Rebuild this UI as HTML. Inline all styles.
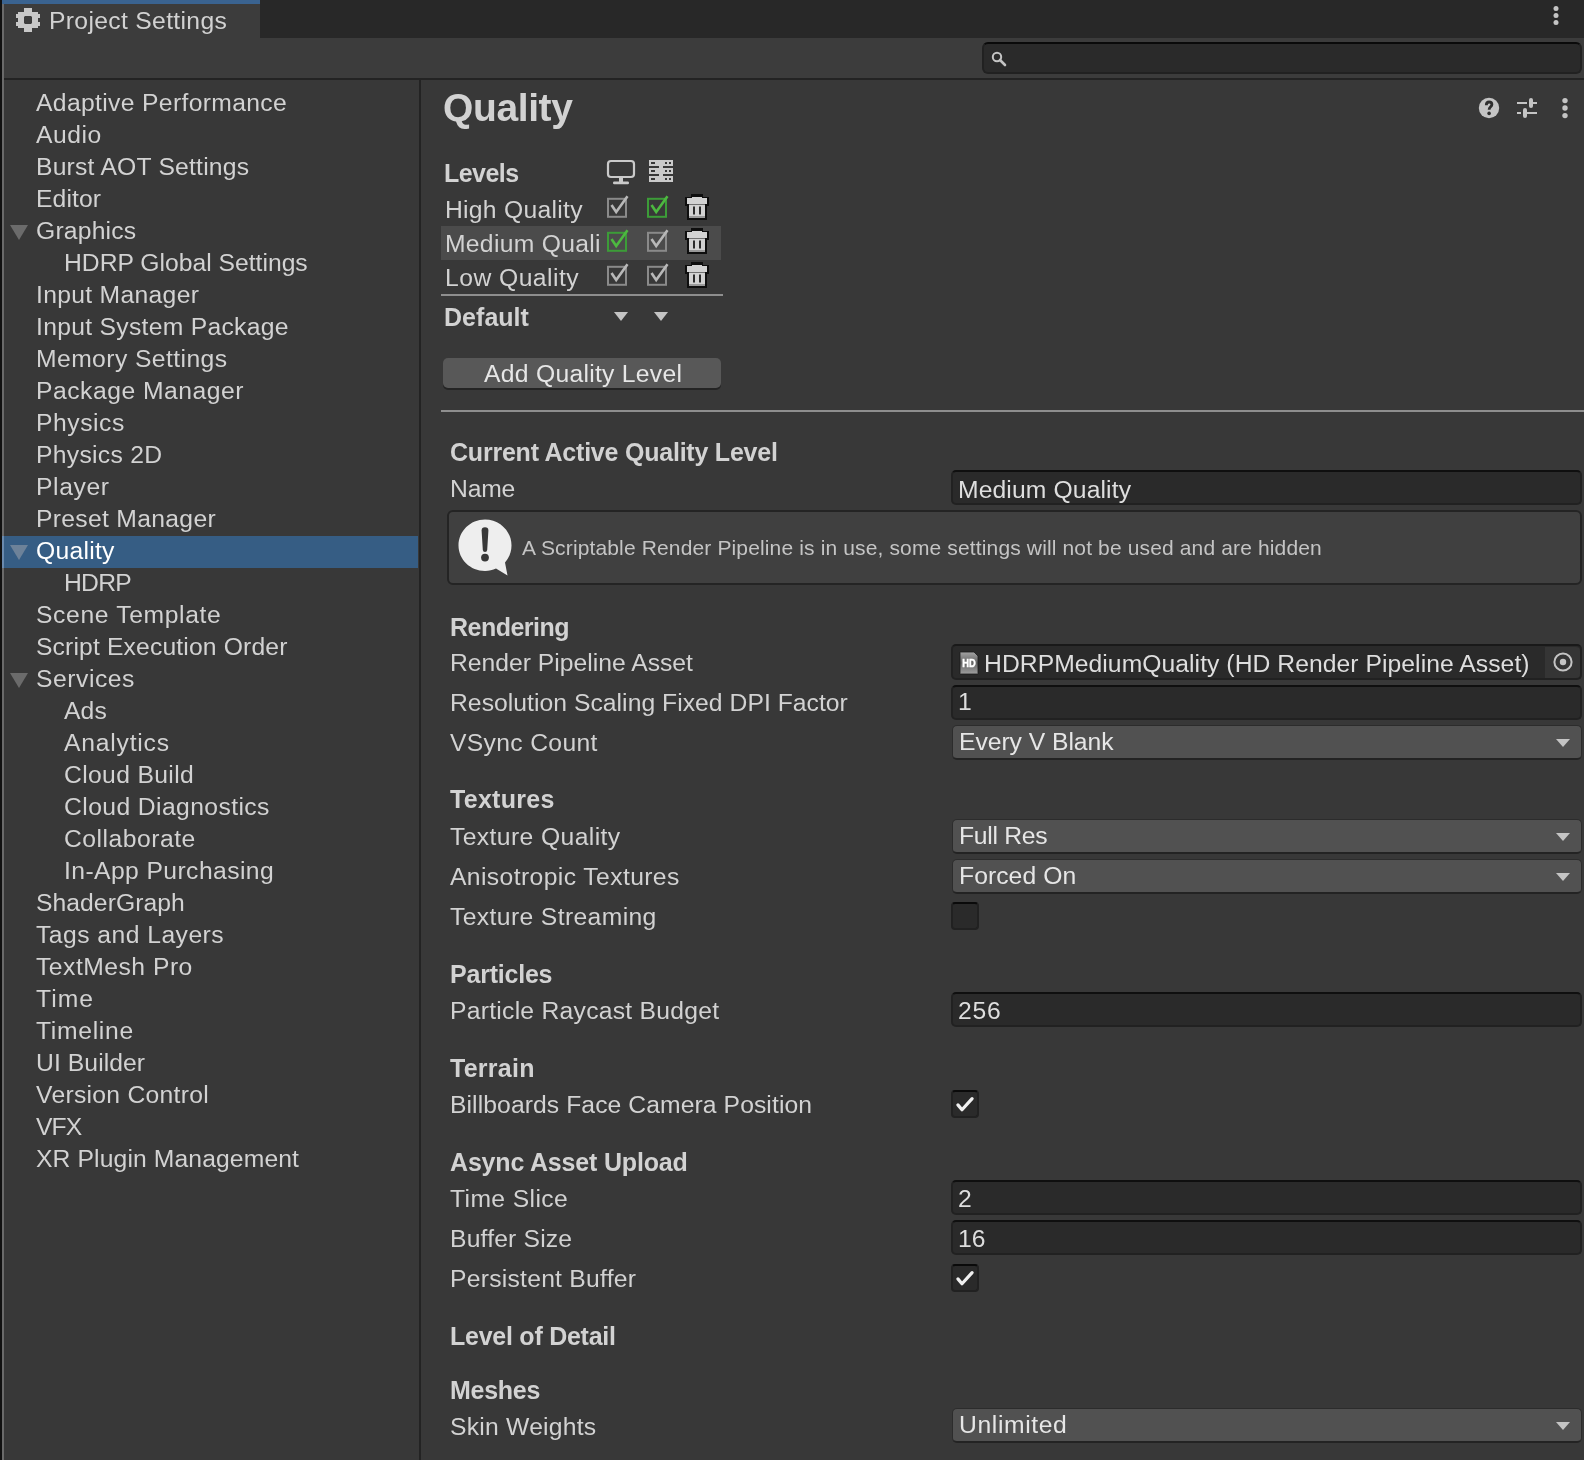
<!DOCTYPE html>
<html><head><meta charset="utf-8"><style>
*{margin:0;padding:0;box-sizing:border-box}
html,body{width:1584px;height:1460px;overflow:hidden;background:#383838;font-family:"Liberation Sans",sans-serif;}
.t{position:absolute;white-space:nowrap;line-height:1;color:#D2D2D2;will-change:transform;}
.r{position:absolute;}
svg{position:absolute;overflow:visible}
</style></head><body>
<div class="r" style="left:0px;top:0px;width:1584px;height:38px;background:#282828"></div>
<div class="r" style="left:0px;top:38px;width:1584px;height:40px;background:#3C3C3C"></div>
<div class="r" style="left:0px;top:78px;width:1584px;height:2px;background:#232323"></div>
<div class="r" style="left:2px;top:0px;width:258px;height:38px;background:#3C3C3C"></div>
<div class="r" style="left:2px;top:0px;width:258px;height:4px;background:#3A6390"></div>
<div class="r" style="left:0px;top:0px;width:2px;height:1460px;background:#111111"></div>
<div class="r" style="left:2px;top:4px;width:2px;height:1456px;background:#6A6A6A"></div>
<svg style="left:16px;top:8px" width="24" height="24" viewBox="0 0 24 24">
<path fill="#C8C8C8" fill-rule="evenodd" d="M8 0H16V4H22V6H24V10H22V14H24V18H22V20H16V24H8V20H2V18H0V14H2V10H0V6H2V4H8Z M9 8H15L16 9V15L15 16H9L8 15V9Z"/></svg>
<div class="t" style="left:49px;top:9.39px;font-size:24.7px;letter-spacing:0.326px;">Project Settings</div>
<svg style="left:1552px;top:4px" width="10" height="24" viewBox="0 0 10 24">
<circle cx="4" cy="4.5" r="2.5" fill="#C4C4C4"/><circle cx="4" cy="11.5" r="2.5" fill="#C4C4C4"/><circle cx="4" cy="18.5" r="2.5" fill="#C4C4C4"/></svg>
<div class="r" style="left:982px;top:42px;width:600px;height:32px;background:#2A2A2A;border:2px solid #212121;border-top-color:#0A0A0A;border-radius:6px"></div>
<svg style="left:990px;top:50px" width="18" height="18" viewBox="0 0 18 18">
<circle cx="7" cy="7" r="4.2" fill="none" stroke="#C4C4C4" stroke-width="2"/><path d="M10 10 L15 15" stroke="#C4C4C4" stroke-width="2.6" stroke-linecap="round"/></svg>
<div class="r" style="left:419px;top:80px;width:2px;height:1380px;background:#232323"></div>
<div class="t" style="left:36px;top:91.39px;font-size:24.7px;letter-spacing:0.342px;">Adaptive Performance</div>
<div class="t" style="left:36px;top:123.39px;font-size:24.7px;letter-spacing:0.500px;">Audio</div>
<div class="t" style="left:36px;top:155.39px;font-size:24.7px;letter-spacing:0.212px;">Burst AOT Settings</div>
<div class="t" style="left:36px;top:187.39px;font-size:24.7px;letter-spacing:0.100px;">Editor</div>
<svg style="left:10px;top:225px" width="18" height="16" viewBox="0 0 18 16"><path d="M0 0H18L9 15z" fill="#6B6B6B"/></svg>
<div class="t" style="left:36px;top:219.39px;font-size:24.7px;letter-spacing:0.199px;">Graphics</div>
<div class="t" style="left:64px;top:251.39px;font-size:24.7px;letter-spacing:-0.005px;">HDRP Global Settings</div>
<div class="t" style="left:36px;top:283.39px;font-size:24.7px;letter-spacing:0.309px;">Input Manager</div>
<div class="t" style="left:36px;top:315.39px;font-size:24.7px;letter-spacing:0.289px;">Input System Package</div>
<div class="t" style="left:36px;top:347.39px;font-size:24.7px;letter-spacing:0.421px;">Memory Settings</div>
<div class="t" style="left:36px;top:379.39px;font-size:24.7px;letter-spacing:0.508px;">Package Manager</div>
<div class="t" style="left:36px;top:411.39px;font-size:24.7px;letter-spacing:0.550px;">Physics</div>
<div class="t" style="left:36px;top:443.39px;font-size:24.7px;letter-spacing:0.300px;">Physics 2D</div>
<div class="t" style="left:36px;top:475.39px;font-size:24.7px;letter-spacing:0.620px;">Player</div>
<div class="t" style="left:36px;top:507.39px;font-size:24.7px;letter-spacing:0.308px;">Preset Manager</div>
<div class="r" style="left:4px;top:536px;width:414px;height:32px;background:#365D84"></div>
<div class="r" style="left:2px;top:536px;width:2px;height:32px;background:#6A8AAE"></div>
<svg style="left:10px;top:545px" width="18" height="16" viewBox="0 0 18 16"><path d="M0 0H18L9 15z" fill="#6D8299"/></svg>
<div class="t" style="left:36px;top:539.39px;font-size:24.7px;letter-spacing:0.266px;color:#FFFFFF;">Quality</div>
<div class="t" style="left:64px;top:571.39px;font-size:24.7px;letter-spacing:-0.733px;">HDRP</div>
<div class="t" style="left:36px;top:603.39px;font-size:24.7px;letter-spacing:0.631px;">Scene Template</div>
<div class="t" style="left:36px;top:635.39px;font-size:24.7px;letter-spacing:0.148px;">Script Execution Order</div>
<svg style="left:10px;top:673px" width="18" height="16" viewBox="0 0 18 16"><path d="M0 0H18L9 15z" fill="#6B6B6B"/></svg>
<div class="t" style="left:36px;top:667.39px;font-size:24.7px;letter-spacing:0.529px;">Services</div>
<div class="t" style="left:64px;top:699.39px;font-size:24.7px;letter-spacing:0.150px;">Ads</div>
<div class="t" style="left:64px;top:731.39px;font-size:24.7px;letter-spacing:0.775px;">Analytics</div>
<div class="t" style="left:64px;top:763.39px;font-size:24.7px;letter-spacing:0.350px;">Cloud Build</div>
<div class="t" style="left:64px;top:795.39px;font-size:24.7px;letter-spacing:0.406px;">Cloud Diagnostics</div>
<div class="t" style="left:64px;top:827.39px;font-size:24.7px;letter-spacing:0.500px;">Collaborate</div>
<div class="t" style="left:64px;top:859.39px;font-size:24.7px;letter-spacing:0.411px;">In-App Purchasing</div>
<div class="t" style="left:36px;top:891.39px;font-size:24.7px;letter-spacing:0.050px;">ShaderGraph</div>
<div class="t" style="left:36px;top:923.39px;font-size:24.7px;letter-spacing:0.464px;">Tags and Layers</div>
<div class="t" style="left:36px;top:955.39px;font-size:24.7px;letter-spacing:0.491px;">TextMesh Pro</div>
<div class="t" style="left:36px;top:987.39px;font-size:24.7px;letter-spacing:1.033px;">Time</div>
<div class="t" style="left:36px;top:1019.39px;font-size:24.7px;letter-spacing:0.686px;">Timeline</div>
<div class="t" style="left:36px;top:1051.39px;font-size:24.7px;letter-spacing:0.078px;">UI Builder</div>
<div class="t" style="left:36px;top:1083.39px;font-size:24.7px;letter-spacing:0.278px;">Version Control</div>
<div class="t" style="left:36px;top:1115.39px;font-size:24.7px;letter-spacing:-0.900px;">VFX</div>
<div class="t" style="left:36px;top:1147.39px;font-size:24.7px;letter-spacing:0.116px;">XR Plugin Management</div>
<div class="t" style="left:443px;top:88.48px;font-size:39.0px;letter-spacing:-0.383px;font-weight:bold;">Quality</div>
<svg style="left:1478px;top:97px" width="22" height="22" viewBox="0 0 22 22">
<circle cx="11" cy="11" r="10.2" fill="#C4C4C4"/>
<path d="M8.3 8.2 C8.3 6 9.6 5 11.1 5 C12.8 5 13.9 6.1 13.9 7.5 C13.9 9.8 11.1 10 11.1 12.8" fill="none" stroke="#2E2E2E" stroke-width="2.8"/>
<circle cx="11.1" cy="16.4" r="1.8" fill="#2E2E2E"/></svg>
<svg style="left:1516px;top:97px" width="22" height="22" viewBox="0 0 22 22">
<rect x="1" y="5" width="10" height="2" fill="#C4C4C4"/><rect x="17" y="5" width="4" height="2" fill="#C4C4C4"/>
<rect x="13" y="1" width="4" height="10" rx="2" fill="#C4C4C4"/>
<rect x="1" y="15" width="4" height="2" fill="#C4C4C4"/><rect x="11" y="15" width="10" height="2" fill="#C4C4C4"/>
<rect x="7" y="11" width="4" height="10" rx="2" fill="#C4C4C4"/></svg>
<svg style="left:1560px;top:97px" width="10" height="22" viewBox="0 0 10 22">
<circle cx="5" cy="3.6" r="2.7" fill="#C4C4C4"/><circle cx="5" cy="11" r="2.7" fill="#C4C4C4"/><circle cx="5" cy="18.6" r="2.7" fill="#C4C4C4"/></svg>
<div class="t" style="left:444px;top:160.83px;font-size:25.0px;letter-spacing:-0.560px;font-weight:bold;">Levels</div>
<svg style="left:606px;top:159px" width="30" height="27" viewBox="0 0 30 27">
<rect x="2" y="2" width="26" height="16" rx="3" fill="none" stroke="#CACACA" stroke-width="2.2"/>
<rect x="13" y="19" width="4" height="4" fill="#CACACA"/><rect x="7" y="22.6" width="16" height="2.6" rx="1.2" fill="#CACACA"/></svg>
<svg style="left:649px;top:160px" width="24" height="23" viewBox="0 0 24 23">
<g fill="#CACACA"><rect x="0" y="0" width="24" height="6"/><rect x="0" y="8" width="24" height="6"/><rect x="0" y="16" width="24" height="6"/>
<rect x="10" y="0" width="4" height="22"/></g>
<g fill="#383838"><rect x="2" y="2" width="4" height="2"/><rect x="16" y="2" width="2" height="2"/><rect x="20" y="2" width="2" height="2"/>
<rect x="2" y="10" width="4" height="2"/><rect x="16" y="10" width="2" height="2"/><rect x="20" y="10" width="2" height="2"/>
<rect x="2" y="18" width="4" height="2"/><rect x="16" y="18" width="2" height="2"/><rect x="20" y="18" width="2" height="2"/></g></svg>
<div class="r" style="left:441px;top:226px;width:280px;height:34px;background:#4B4B4B"></div>
<div class="t" style="left:445px;top:198.09px;font-size:24.7px;letter-spacing:0.273px;">High Quality</div>
<svg style="left:607px;top:194px" width="24" height="24" viewBox="0 0 24 24">
<rect x="1" y="4.8" width="18" height="18" fill="none" stroke="#8A8A8A" stroke-width="2"/>
<path d="M4.5 11 L9.2 18 L20.5 2.2" fill="none" stroke="#B8B8B8" stroke-width="2.6"/></svg>
<svg style="left:647px;top:194px" width="24" height="24" viewBox="0 0 24 24">
<rect x="1" y="4.8" width="18" height="18" fill="none" stroke="#3C9C38" stroke-width="2"/>
<path d="M4.5 11 L9.2 18 L20.5 2.2" fill="none" stroke="#4DB840" stroke-width="2.6"/></svg>
<svg style="left:685px;top:194px" width="24" height="26" viewBox="0 0 24 26">
<path d="M6 0h12v3h6v9h-2v14H2V12H0V3h6z" fill="#0E0E0E"/>
<rect x="2" y="4" width="20" height="6" fill="#D2D2D2"/><rect x="7" y="3" width="10" height="2" fill="#D2D2D2"/>
<rect x="4" y="10.5" width="16" height="13.5" fill="#D2D2D2"/><rect x="4" y="22" width="16" height="2" fill="#9A9A9A"/>
<rect x="8" y="12.5" width="2" height="8" fill="#2A2A2A"/><rect x="14" y="12.5" width="2" height="8" fill="#2A2A2A"/></svg>
<div class="t" style="left:445px;top:232.09px;font-size:24.7px;letter-spacing:0.290px;">Medium Quali</div>
<svg style="left:607px;top:228px" width="24" height="24" viewBox="0 0 24 24">
<rect x="1" y="4.8" width="18" height="18" fill="none" stroke="#3C9C38" stroke-width="2"/>
<path d="M4.5 11 L9.2 18 L20.5 2.2" fill="none" stroke="#4DB840" stroke-width="2.6"/></svg>
<svg style="left:647px;top:228px" width="24" height="24" viewBox="0 0 24 24">
<rect x="1" y="4.8" width="18" height="18" fill="none" stroke="#8A8A8A" stroke-width="2"/>
<path d="M4.5 11 L9.2 18 L20.5 2.2" fill="none" stroke="#B8B8B8" stroke-width="2.6"/></svg>
<svg style="left:685px;top:228px" width="24" height="26" viewBox="0 0 24 26">
<path d="M6 0h12v3h6v9h-2v14H2V12H0V3h6z" fill="#0E0E0E"/>
<rect x="2" y="4" width="20" height="6" fill="#D2D2D2"/><rect x="7" y="3" width="10" height="2" fill="#D2D2D2"/>
<rect x="4" y="10.5" width="16" height="13.5" fill="#D2D2D2"/><rect x="4" y="22" width="16" height="2" fill="#9A9A9A"/>
<rect x="8" y="12.5" width="2" height="8" fill="#2A2A2A"/><rect x="14" y="12.5" width="2" height="8" fill="#2A2A2A"/></svg>
<div class="t" style="left:445px;top:266.19px;font-size:24.7px;letter-spacing:0.460px;">Low Quality</div>
<svg style="left:607px;top:262px" width="24" height="24" viewBox="0 0 24 24">
<rect x="1" y="4.8" width="18" height="18" fill="none" stroke="#8A8A8A" stroke-width="2"/>
<path d="M4.5 11 L9.2 18 L20.5 2.2" fill="none" stroke="#B8B8B8" stroke-width="2.6"/></svg>
<svg style="left:647px;top:262px" width="24" height="24" viewBox="0 0 24 24">
<rect x="1" y="4.8" width="18" height="18" fill="none" stroke="#8A8A8A" stroke-width="2"/>
<path d="M4.5 11 L9.2 18 L20.5 2.2" fill="none" stroke="#B8B8B8" stroke-width="2.6"/></svg>
<svg style="left:685px;top:262px" width="24" height="26" viewBox="0 0 24 26">
<path d="M6 0h12v3h6v9h-2v14H2V12H0V3h6z" fill="#0E0E0E"/>
<rect x="2" y="4" width="20" height="6" fill="#D2D2D2"/><rect x="7" y="3" width="10" height="2" fill="#D2D2D2"/>
<rect x="4" y="10.5" width="16" height="13.5" fill="#D2D2D2"/><rect x="4" y="22" width="16" height="2" fill="#9A9A9A"/>
<rect x="8" y="12.5" width="2" height="8" fill="#2A2A2A"/><rect x="14" y="12.5" width="2" height="8" fill="#2A2A2A"/></svg>
<div class="r" style="left:441px;top:294px;width:282px;height:2px;background:#8E8E8E"></div>
<div class="t" style="left:444px;top:304.83px;font-size:25.0px;letter-spacing:0.033px;font-weight:bold;">Default</div>
<svg style="left:614px;top:312px" width="14" height="9" viewBox="0 0 14 9"><path d="M0 0H14L7 9z" fill="#C4C4C4"/></svg>
<svg style="left:654px;top:312px" width="14" height="9" viewBox="0 0 14 9"><path d="M0 0H14L7 9z" fill="#C4C4C4"/></svg>
<div class="r" style="left:443px;top:358px;width:278px;height:30px;background:#585858;border-radius:5px;box-shadow:0 2px 0 #242424"></div>
<div class="t" style="left:484px;top:362.39px;font-size:24.7px;letter-spacing:0.281px;color:#E6E6E6;">Add Quality Level</div>
<div class="r" style="left:441px;top:410px;width:1143px;height:2px;background:#8E8E8E"></div>
<div class="t" style="left:450px;top:440.13px;font-size:25.0px;letter-spacing:-0.222px;font-weight:bold;">Current Active Quality Level</div>
<div class="t" style="left:450px;top:477.29px;font-size:24.7px;letter-spacing:-0.167px;">Name</div>
<div class="r" style="left:951px;top:470px;width:631px;height:35px;background:#2A2A2A;border:2px solid #212121;border-top-color:#0F0F0F;border-radius:5px"></div>
<div class="t" style="left:958px;top:477.69px;font-size:24.7px;letter-spacing:0.115px;color:#DEDEDE;">Medium Quality</div>
<div class="r" style="left:447px;top:510px;width:1135px;height:75px;background:#404040;border:2px solid #242424;border-radius:6px"></div>
<svg style="left:456px;top:518px" width="60" height="62" viewBox="0 0 60 62">
<path d="M29 1.5 C43.5 1.5 55.5 13 55.5 27.5 C55.5 34 53 40 49 44.5 L51.5 57.5 L40 50.5 C36.8 52 33 53 29 53 C14.5 53 2.5 41.5 2.5 27.5 C2.5 13 14.5 1.5 29 1.5Z" fill="#EEEEEE"/>
<path d="M25.6 12.5 Q25.6 9.2 29 9.2 Q32.4 9.2 32.4 12.5 L31.2 32 Q31 34 29 34 Q27 34 26.8 32 Z" fill="#383838"/><circle cx="29" cy="39.6" r="3.9" fill="#383838"/></svg>
<div class="t" style="left:522px;top:536.72px;font-size:21.0px;letter-spacing:0.140px;color:#C4C4C4;">A Scriptable Render Pipeline is in use, some settings will not be used and are hidden</div>
<div class="t" style="left:450px;top:614.63px;font-size:25.0px;letter-spacing:-0.511px;font-weight:bold;">Rendering</div>
<div class="t" style="left:450px;top:650.99px;font-size:24.7px;letter-spacing:0.000px;">Render Pipeline Asset</div>
<div class="r" style="left:951px;top:644px;width:631px;height:36px;background:#2A2A2A;border:2px solid #212121;border-top-color:#191919;border-radius:5px"></div>
<div class="r" style="left:1545px;top:647px;width:35px;height:31px;background:#353535;border-radius:0 4px 4px 0"></div>
<svg style="left:1552px;top:651px" width="22" height="22" viewBox="0 0 22 22"><circle cx="11" cy="11" r="8.6" fill="none" stroke="#C4C4C4" stroke-width="2"/><circle cx="11" cy="11" r="3.2" fill="#C4C4C4"/></svg>
<svg style="left:959px;top:651px;will-change:transform" width="20" height="24" viewBox="0 0 20 24">
<defs><linearGradient id="hdg" x1="0" y1="0" x2="0" y2="1"><stop offset="0" stop-color="#A4A4A4"/><stop offset="0.5" stop-color="#626262"/><stop offset="1" stop-color="#A0A0A0"/></linearGradient></defs>
<path d="M1.5 1H15L19 5V22.5Q19 23 18.5 23H1.5Q1 23 1 22.5V1.5Q1 1 1.5 1Z" fill="url(#hdg)" stroke="#1A1A1A" stroke-width="0.8"/>
<text x="10" y="16.2" font-family="Liberation Sans" font-weight="bold" font-size="11.5" fill="#FFFFFF" stroke="#FFFFFF" stroke-width="0.5" text-anchor="middle" textLength="13.4" lengthAdjust="spacingAndGlyphs">HD</text></svg>
<div class="t" style="left:983.8px;top:651.89px;font-size:24.7px;letter-spacing:0.051px;color:#DEDEDE;">HDRPMediumQuality (HD Render Pipeline Asset)</div>
<div class="t" style="left:450px;top:690.99px;font-size:24.7px;letter-spacing:0.038px;">Resolution Scaling Fixed DPI Factor</div>
<div class="r" style="left:951px;top:685px;width:631px;height:35px;background:#2A2A2A;border:2px solid #212121;border-top-color:#0F0F0F;border-radius:5px"></div>
<div class="t" style="left:958px;top:690.19px;font-size:24.7px;color:#DEDEDE;">1</div>
<div class="t" style="left:450px;top:731.39px;font-size:24.7px;letter-spacing:0.330px;">VSync Count</div>
<div class="r" style="left:952px;top:725px;width:630px;height:35px;background:#515151;border:1px solid #2C2C2C;border-bottom:2px solid #232323;border-radius:5px"></div>
<div class="t" style="left:959px;top:730.09px;font-size:24.7px;letter-spacing:-0.042px;color:#E6E6E6;">Every V Blank</div>
<svg style="left:1556px;top:739px" width="14" height="8" viewBox="0 0 14 8"><path d="M0 0H14L7 8z" fill="#C4C4C4"/></svg>
<div class="t" style="left:450px;top:787.43px;font-size:25.0px;letter-spacing:0.285px;font-weight:bold;">Textures</div>
<div class="t" style="left:450px;top:824.99px;font-size:24.7px;letter-spacing:0.393px;">Texture Quality</div>
<div class="r" style="left:952px;top:819px;width:630px;height:35px;background:#515151;border:1px solid #2C2C2C;border-bottom:2px solid #232323;border-radius:5px"></div>
<div class="t" style="left:959px;top:824.09px;font-size:24.7px;letter-spacing:-0.286px;color:#E6E6E6;">Full Res</div>
<svg style="left:1556px;top:833px" width="14" height="8" viewBox="0 0 14 8"><path d="M0 0H14L7 8z" fill="#C4C4C4"/></svg>
<div class="t" style="left:450px;top:864.99px;font-size:24.7px;letter-spacing:0.395px;">Anisotropic Textures</div>
<div class="r" style="left:952px;top:859px;width:630px;height:35px;background:#515151;border:1px solid #2C2C2C;border-bottom:2px solid #232323;border-radius:5px"></div>
<div class="t" style="left:959px;top:864.09px;font-size:24.7px;letter-spacing:0.062px;color:#E6E6E6;">Forced On</div>
<svg style="left:1556px;top:873px" width="14" height="8" viewBox="0 0 14 8"><path d="M0 0H14L7 8z" fill="#C4C4C4"/></svg>
<div class="t" style="left:450px;top:904.89px;font-size:24.7px;letter-spacing:0.375px;">Texture Streaming</div>
<div class="r" style="left:951px;top:902px;width:28px;height:28px;background:#2A2A2A;border:2px solid #212121;border-top-color:#0A0A0A;border-radius:4px"></div>
<div class="t" style="left:450px;top:962.03px;font-size:25.0px;letter-spacing:-0.214px;font-weight:bold;">Particles</div>
<div class="t" style="left:450px;top:998.79px;font-size:24.7px;letter-spacing:0.255px;">Particle Raycast Budget</div>
<div class="r" style="left:951px;top:992px;width:631px;height:35px;background:#2A2A2A;border:2px solid #212121;border-top-color:#0F0F0F;border-radius:5px"></div>
<div class="t" style="left:958px;top:998.89px;font-size:24.7px;letter-spacing:0.750px;color:#DEDEDE;">256</div>
<div class="t" style="left:450px;top:1055.73px;font-size:25.0px;letter-spacing:0.267px;font-weight:bold;">Terrain</div>
<div class="t" style="left:450px;top:1092.89px;font-size:24.7px;letter-spacing:0.083px;">Billboards Face Camera Position</div>
<div class="r" style="left:951px;top:1090px;width:28px;height:28px;background:#2A2A2A;border:2px solid #212121;border-top-color:#0A0A0A;border-radius:4px"></div>
<svg style="left:951px;top:1090px" width="28" height="28" viewBox="0 0 28 28"><path d="M6.9 14.9 L11 19.8 L21.1 8.6" fill="none" stroke="#F0F0F0" stroke-width="3.2" stroke-linecap="round" stroke-linejoin="round"/></svg>
<div class="t" style="left:450px;top:1149.83px;font-size:25.0px;letter-spacing:-0.177px;font-weight:bold;">Async Asset Upload</div>
<div class="t" style="left:450px;top:1186.59px;font-size:24.7px;letter-spacing:0.378px;">Time Slice</div>
<div class="r" style="left:951px;top:1180px;width:631px;height:35px;background:#2A2A2A;border:2px solid #212121;border-top-color:#0F0F0F;border-radius:5px"></div>
<div class="t" style="left:958px;top:1186.89px;font-size:24.7px;color:#DEDEDE;">2</div>
<div class="t" style="left:450px;top:1226.79px;font-size:24.7px;letter-spacing:0.180px;">Buffer Size</div>
<div class="r" style="left:951px;top:1220px;width:631px;height:35px;background:#2A2A2A;border:2px solid #212121;border-top-color:#0F0F0F;border-radius:5px"></div>
<div class="t" style="left:958px;top:1226.89px;font-size:24.7px;color:#DEDEDE;">16</div>
<div class="t" style="left:450px;top:1266.69px;font-size:24.7px;letter-spacing:0.244px;">Persistent Buffer</div>
<div class="r" style="left:951px;top:1264px;width:28px;height:28px;background:#2A2A2A;border:2px solid #212121;border-top-color:#0A0A0A;border-radius:4px"></div>
<svg style="left:951px;top:1264px" width="28" height="28" viewBox="0 0 28 28"><path d="M6.9 14.9 L11 19.8 L21.1 8.6" fill="none" stroke="#F0F0F0" stroke-width="3.2" stroke-linecap="round" stroke-linejoin="round"/></svg>
<div class="t" style="left:450px;top:1324.03px;font-size:25.0px;letter-spacing:-0.250px;font-weight:bold;">Level of Detail</div>
<div class="t" style="left:450px;top:1377.63px;font-size:25.0px;letter-spacing:-0.280px;font-weight:bold;">Meshes</div>
<div class="t" style="left:450px;top:1415.19px;font-size:24.7px;letter-spacing:0.236px;">Skin Weights</div>
<div class="r" style="left:952px;top:1408px;width:630px;height:35px;background:#515151;border:1px solid #2C2C2C;border-bottom:2px solid #232323;border-radius:5px"></div>
<div class="t" style="left:959px;top:1413.09px;font-size:24.7px;letter-spacing:0.611px;color:#E6E6E6;">Unlimited</div>
<svg style="left:1556px;top:1422px" width="14" height="8" viewBox="0 0 14 8"><path d="M0 0H14L7 8z" fill="#C4C4C4"/></svg>
</body></html>
